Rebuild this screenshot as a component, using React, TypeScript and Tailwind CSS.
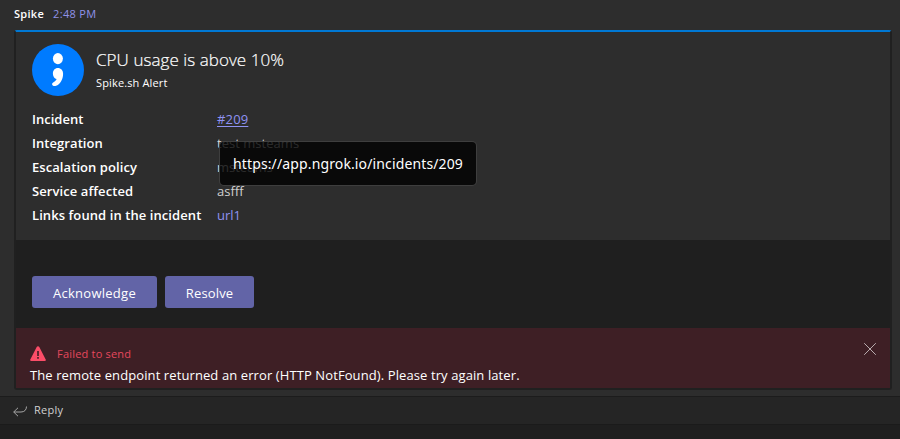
import React from "react";

const facts = [
  { label: "Incident", value: "#209", labelClass: "", valueClass: "text-[#8f92f2] tracking-[0.15px] underline underline-offset-2" },
  { label: "Integration", value: "test msteams", labelClass: "tracking-[0.06px]", valueClass: "text-[#d8d8d8] tracking-[0.03px]" },
  { label: "Escalation policy", value: "msteams", labelClass: "tracking-[0.07px]", valueClass: "text-[#d8d8d8]" },
  { label: "Service affected", value: "asfff", labelClass: "tracking-[0.09px]", valueClass: "text-[#d0d0d0]" },
  { label: "Links found in the incident", value: "url1", labelClass: "tracking-[0.08px]", valueClass: "text-[#8f92f2]" },
];

function SpikeLogo() {
  return (
    <svg className="size-[52px] shrink-0" viewBox="0 0 52 52">
      <circle cx="26" cy="26" r="26" fill="#007bff" />
      <ellipse cx="25.9" cy="14.6" rx="5" ry="5.6" fill="#fff" />
      <path d="M25.900 24c3 0 5.200 2.300 5.200 5.700 0 6-3.200 10.800-7 12.100-2.100.700-4-.1-4-1.600 0-1 .7-1.700 1.800-2.300 1.600-.9 2.300-1.600 2.700-2.800-2.200-.7-3.700-2.800-3.700-5.400 0-3.400 2-5.700 5-5.700Z" fill="#fff" />
    </svg>
  );
}

function WarningIcon() {
  return (
    <svg className="h-[16px] w-[16px]" viewBox="0 0 16 16">
      <path d="M8 0.300c.6 0 1 .3 1.300.8l6.400 12.300c.5.9 0 1.600-.9 1.600H1.200c-.9 0-1.400-.7-.9-1.600L6.700 1.100C7 .6 7.400.300 8 .300Z" fill="#fb4d68" />
      <path d="M7.200 5h1.600v5H7.200zM7.200 11.100h1.600v1.600H7.200z" fill="#3e1f25" />
    </svg>
  );
}

export default function App() {
  return (
    <div className="flex h-[439px] w-[900px] flex-col overflow-hidden bg-[#2d2d2d] font-['Open_Sans','Noto_Sans',sans-serif] whitespace-nowrap">
      <header className="flex h-[30px] items-center gap-[9px] pb-[2px] pl-[14px] text-[11px]">
        <span className="font-semibold tracking-[0.3px] text-white">Spike</span>
        <span className="tracking-[0.3px] text-[#9092e8]">2:48 PM</span>
      </header>
      <main className="mr-[8px] ml-[14px] flex h-[360px] flex-col rounded-[3px] border-x-2 border-t-2 border-b-2 border-x-[#202020] border-t-[#0078d4] border-b-[#202020] bg-[#1f1f1f]">
        <section className="relative h-[208px] bg-[#2d2d2d] pt-[12px] pl-[16px]">
          <div className="flex gap-[12px]">
            <SpikeLogo />
            <div className="flex flex-col pt-[3px] text-white">
              <h1 className="h-[26px] self-start text-[17px] leading-[25px] font-light tracking-[0.06px] [-webkit-text-stroke:0.2px_white]">CPU usage is above 10%</h1>
              <p className="self-start text-[11px] leading-[20px] tracking-[0.14px]">Spike.sh Alert</p>
            </div>
          </div>
          <dl className="mt-[11px] text-[13px] leading-[24px]">
            {facts.map((fact) => (
              <div key={fact.label} className="flex h-[24px]">
                <dt className="w-[185px] font-semibold text-white">
                  <span className={fact.labelClass}>{fact.label}</span>
                </dt>
                <dd className={fact.valueClass}>{fact.value}</dd>
              </div>
            ))}
          </dl>
          <div className="absolute top-[109px] left-[203px] flex h-[45px] w-[258px] items-center rounded-[5px] border border-[#444]/90 bg-black/80 pl-[13px] font-['Noto_Sans',sans-serif] text-[14px] tracking-[0.13px] text-white">
            <span>https://app.ngrok.io/incidents/209</span>
          </div>
        </section>
        <section className="flex h-[88px] gap-[8px] pt-[36px] pl-[16px]">
          <button className="h-[32px] w-[125px] rounded-[3px] bg-[#6264a7] pt-[3px] text-[13px] tracking-[0.27px] text-white">
            <span>Acknowledge</span>
          </button>
          <button className="h-[32px] w-[89px] rounded-[3px] bg-[#6264a7] pt-[3px] text-[13px] tracking-[0.15px] text-white">
            <span>Resolve</span>
          </button>
        </section>
        <section className="flex h-[60px] justify-between bg-[#3e1f25] pt-[15px] pr-[14px] pl-[14px]">
          <div>
            <div className="flex h-[21px] items-center gap-[11px] text-[11px] text-[#e5485d]">
              <WarningIcon />
              <span className="pt-[2px] tracking-[0.2px]">Failed to send</span>
            </div>
            <p className="text-[13px] leading-[22px] text-white">
              <span className="tracking-[0.1px]">The remote endpoint returned an error (HTTP NotFound). Please try again later.</span>
            </p>
          </div>
          <svg className="size-[12px]" viewBox="0 0 12 12" stroke="#b9adaf">
            <path d="M0.200 0.200 11.800 11.800M11.800 0.200 0.200 11.800" />
          </svg>
        </section>
      </main>
      <div className="mt-[6px] flex h-[29px] shrink-0 items-center gap-[6px] border-y border-t-[#1c1c1c] border-b-[#1b1b1b] bg-[#252525] pl-[13px] text-[11px] text-[#d0d0d0]">
        <svg className="mt-[2px] h-[11px] w-[15px]" viewBox="0 0 15 11" fill="none" stroke="#a5a5a5">
          <path d="M13.500.500C13.500 4 11.300 6 8 6H.800M5 1.800.700 6 5 10.200" />
        </svg>
        <span className="tracking-[0.25px]">Reply</span>
      </div>
      <div className="h-[14px] bg-[#1f1f1f]" />
    </div>
  );
}
